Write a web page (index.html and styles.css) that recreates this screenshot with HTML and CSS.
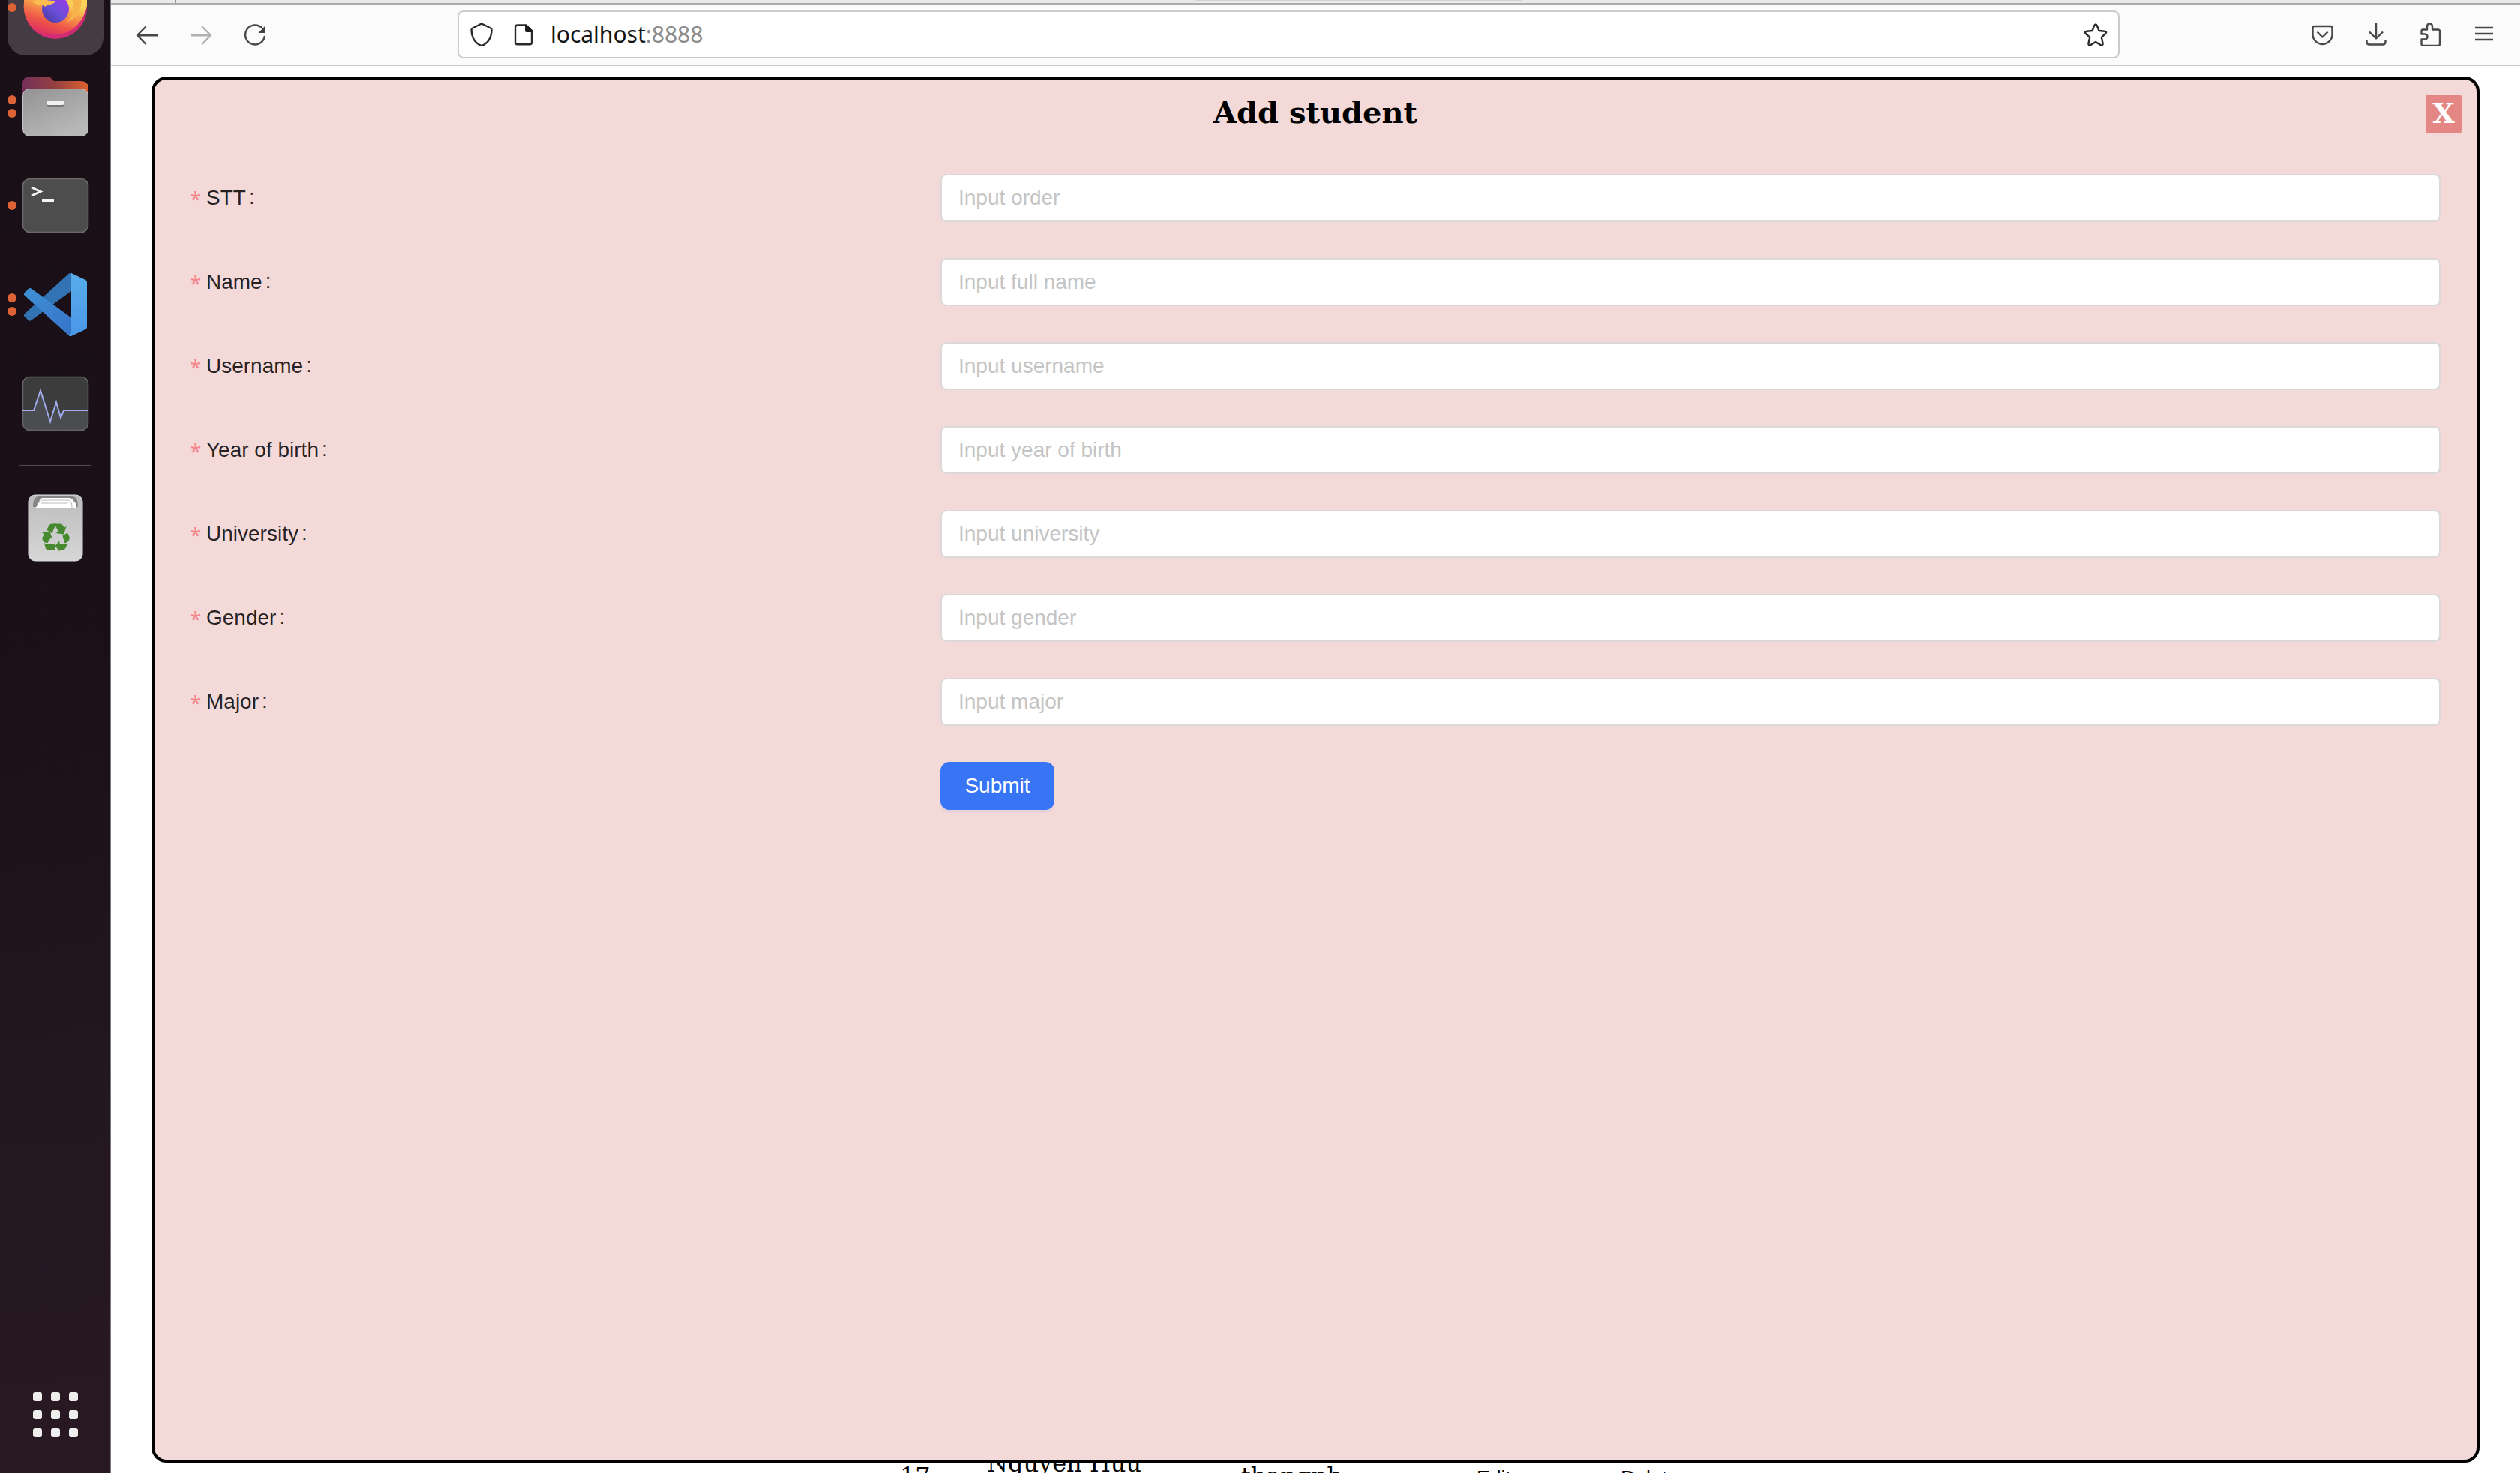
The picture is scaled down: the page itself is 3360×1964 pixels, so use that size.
FILE: index.html
```html
<!DOCTYPE html>
<html lang="en">
<head>
<meta charset="utf-8">
<title>Add student</title>
<link rel="stylesheet" href="styles.css">
</head>
<body>
<div class="desktop">
  <nav class="dock">
    <div class="dock-item dock-item-active">
      <svg width="128" height="74" viewBox="0 0 128 74">
        <defs>
          <linearGradient id="ffBody" x1="0.8" y1="0" x2="0.35" y2="1">
            <stop offset="0.35" stop-color="#fbd158"/><stop offset="0.55" stop-color="#f6974a"/><stop offset="0.78" stop-color="#ee5548"/><stop offset="1" stop-color="#dd3360"/>
          </linearGradient>
          <linearGradient id="ffCore" x1="1" y1="0" x2="0.2" y2="1">
            <stop offset="0.2" stop-color="#9040e6"/><stop offset="0.6" stop-color="#6a4fd8"/><stop offset="1" stop-color="#4a3aa6"/>
          </linearGradient>
        </defs>
        <circle cx="6" cy="10" r="6" fill="#dd6236"/>
        <circle cx="64" cy="10" r="42" fill="#d42c74"/>
        <path d="M22 4 A42 40 0 0 0 28 30 C38 46 54 47 64 46 C84 46 100 32 106 8 L106 -20 L22 -20Z" fill="url(#ffBody)"/>
        <path d="M84 -2 C92 6 88 22 78 30 C94 24 100 12 98 -2Z" fill="#f7b34c"/>
        <circle cx="64" cy="12" r="18" fill="url(#ffCore)"/>
        <path d="M33 2 C42 -4 56 2 64 1 C62 7 54 5 50 9 C48 5 38 8 33 2Z" fill="#fbbb4e"/>
      </svg>
    </div>
    <div class="dock-item">
      <svg width="128" height="128" viewBox="0 0 128 128">
        <defs>
          <linearGradient id="folderBack"><stop offset="0" stop-color="#74305a"/><stop offset="0.5" stop-color="#94403f"/><stop offset="1" stop-color="#e0622f"/></linearGradient>
          <linearGradient id="folderFront" x1="0" y1="0" x2="0.6" y2="1"><stop offset="0" stop-color="#939393"/><stop offset="1" stop-color="#b8b8b8"/></linearGradient>
        </defs>
        <circle cx="6" cy="55" r="6" fill="#dd6236"/><circle cx="6" cy="73" r="6" fill="#dd6236"/>
        <path d="M20 60 V34 Q20 24 30 24 H54 Q57 24 59 27 L62 30 H98 Q108 30 108 40 V60Z" fill="url(#folderBack)"/>
        <rect x="20.500" y="40.500" width="87" height="63" rx="9" fill="url(#folderFront)" stroke="#c4c4c4"/>
        <rect x="52" y="58" width="24" height="6" rx="3" fill="#777"/>
        <rect x="52" y="56" width="24" height="6" rx="3" fill="#f0f0f0"/>
      </svg>
    </div>
    <div class="dock-item">
      <svg width="128" height="128" viewBox="0 0 128 128">
        <circle cx="6" cy="64" r="6" fill="#dd6236"/>
        <rect x="20.500" y="28.500" width="87" height="71" rx="9" fill="#4d4d4d" stroke="#6b6b6b" stroke-width="1.500"/>
        <path d="M32 40 L44 45.500 L32 51" fill="none" stroke="#f2f2f2" stroke-width="3"/>
        <path d="M46 57.500 H62" stroke="#f2f2f2" stroke-width="3.500"/>
      </svg>
    </div>
    <div class="dock-item">
      <svg width="128" height="128" viewBox="0 0 128 128">
        <defs>
          <linearGradient id="codeRight" x1="0" y1="0" x2="0" y2="1"><stop offset="0" stop-color="#58adea"/><stop offset="1" stop-color="#4b97e8"/></linearGradient>
          <linearGradient id="codeFront" x1="0" y1="0" x2="1" y2="1"><stop offset="0" stop-color="#3f92d6"/><stop offset="1" stop-color="#3672c8"/></linearGradient>
        </defs>
        <circle cx="6" cy="55" r="6" fill="#dd6236"/><circle cx="6" cy="73" r="6" fill="#dd6236"/>
        <path d="M82 22.500 Q84 21.500 86 22.500 V45.300 L31.500 85 Q29.500 86.500 28 85 L22.800 80 Q21 78 23 76Z" fill="#3273b3"/>
        <path d="M23 52 Q21 50 22.800 48 L28 42.800 Q30 41 32 42.800 L86 82.300 V105.500 Q83 106.500 81 104.500Z" fill="url(#codeFront)"/>
        <path d="M85 22 L104 31 Q106 32 106 34 V94 Q106 96 104 97 L86 105.500 Q84 106.500 82 105.500 L85 102Z" fill="url(#codeRight)"/>
      </svg>
    </div>
    <div class="dock-item">
      <svg width="128" height="128" viewBox="0 0 128 128">
        <rect x="20.500" y="28.500" width="87" height="71" rx="9" fill="#3c3c3c"/>
        <path d="M20.500 73 H35 L44 46 L57 89 L65 62 L71 83 L75 73 H107.500 V90.500 Q107.500 99.500 98.500 99.500 H29.500 Q20.500 99.500 20.500 90.500Z" fill="#4a4c50"/>
        <rect x="20.500" y="28.500" width="87" height="71" rx="9" fill="none" stroke="#636563" stroke-width="1.500"/>
        <path d="M20 73 H35 L44 46.500 L57 88 L65 62 L71 83 L75 73 H108" fill="none" stroke="#9fabee" stroke-width="2"/>
      </svg>
    </div>
    <hr class="dock-rule">
    <div class="dock-item">
      <svg width="128" height="128" viewBox="0 0 128 128">
        <defs>
          <linearGradient id="binBody" x1="0" y1="0" x2="0" y2="1"><stop offset="0" stop-color="#bdbdbd"/><stop offset="1" stop-color="#d6d6d6"/></linearGradient>
        </defs>
        <rect x="28" y="20" width="72" height="88" rx="9" fill="url(#binBody)" stroke="#dcdcdc"/>
        <path d="M34 36 Q34 22 42 22 H86 Q94 22 94 36Z" fill="#858585"/>
        <path d="M38 37 L43 27 Q44 24 47 24 H82 Q86 24 88 28 L92 32 V37Z" fill="#fff"/>
        <path d="M42 31 L46 27 H82 Q86 28 86 37 M44 31 H80" fill="none" stroke="#bbb"/>
        <g fill="#46892f">
          <path d="M52 66.500 L56 60 Q57 58.500 59 58.500 H65 L60 69.500 L58.500 71Z"/>
          <path d="M62.500 58.500 H71 Q72.500 58.500 73.500 60 L75.500 63.500 L78.500 62 L75 72.500 L64.500 71 L68 69Z"/>
          <path d="M73.500 74.500 L80 70.500 L82.500 76 Q83.200 78 82.200 80 Q80.500 84 76 84.200Z"/>
          <path d="M80.500 84.500 L77 91.500 Q76 93.500 73.500 93.500 H69.500 V95.500 L63.500 88 L69.500 81 V85.500 H75Z"/>
          <path d="M49 84.500 Q51 85.500 54 85.500 H63 V93.500 H54 Q52 93.500 51 91.500Z"/>
          <path d="M46 70 L56.500 69 L60 79 L57.500 77.500 L53.500 84 Q49 84.500 47 80.500 Q45.500 78 47 76 L49 72.500Z"/>
        </g>
      </svg>
    </div>
    <div class="app-grid">
      <i></i><i></i><i></i><i></i><i></i><i></i><i></i><i></i><i></i>
    </div>
  </nav>

  <div class="browser">
    <div class="tab-strip"><span class="tab-divider"></span><span class="tab-shade"></span></div>
    <header class="toolbar">
      <div class="tools">
        <svg class="icon" viewBox="0 0 32 32"><path d="M30 17.200H3.500M14.500 5.500 3 17.200 14.500 29" /></svg>
        <svg class="icon icon-off" viewBox="0 0 32 32"><path d="M2 17.200H28.500M17.500 5.500 29 17.200 17.500 29"/></svg>
        <svg class="icon" viewBox="0 0 32 32"><path d="M25.500 7.500A13 13 0 1 0 29 18"/><path class="solid" d="M30 4V14H20.500Z"/></svg>
      </div>
      <div class="url-bar">
        <svg class="icon icon-dark" viewBox="0 0 32 32"><path d="M16 1.500 28 7.500Q29.500 8.200 29.500 10 29 26 16 31.200 3 26 2.500 10 2.500 8.200 4 7.500Z"/></svg>
        <svg class="icon icon-dark" viewBox="0 0 32 32"><path d="M8 3.500H19.500L27 11V26.500Q27 29.200 24.300 29.200H7.700Q5 29.200 5 26.500V6.500Q5 3.500 8 3.500Z"/><path class="solid" d="M18 3H20L28 11V13H20Q18 13 18 11Z"/></svg>
        <span class="url">localhost<span class="port">:8888</span></span>
        <svg class="icon icon-dark star" viewBox="0 0 32 32"><path d="M16 2.500Q17.200 2.500 18 4.500L20.500 11 28 11.800Q31.500 12.500 29 15L23.800 19.800 25.500 27.500Q26 31.500 22.500 30L16 26 9.500 30Q6 31.500 6.500 27.500L8.200 19.800 3 15Q.5 12.500 4 11.800L11.500 11 14 4.500Q14.800 2.500 16 2.500Z"/></svg>
      </div>
      <div class="tools tools-right">
        <svg class="icon" viewBox="0 0 32 32"><path d="M6 5H27Q29.500 5 29.500 7.500V16A13 13 0 0 1 3.500 16V7.500Q3.500 5 6 5ZM9.500 12.500 16.500 19.500 23.500 12.500"/></svg>
        <svg class="icon" viewBox="0 0 32 32"><path d="M16 1V21.500M7 12.500 16 21.500 25 12.500M3.500 23V26Q3.500 29.500 7 29.500H25Q28.500 29.500 28.500 26V23"/></svg>
        <svg class="icon" viewBox="0 0 32 32"><path d="M6 9.500H12V5.500Q12 1.500 15.500 1.500T19 5.500V9.500H26.500Q29 9.500 29 12V28.500Q29 31 26.500 31H6.500Q4.500 31 4.500 28.500V22.500H8.500Q12.500 22.500 12.500 19T8.500 15.500H4.500V12Q4.500 9.500 6 9.500Z"/></svg>
        <svg class="icon" viewBox="0 0 32 32"><path d="M4 7H28M4 15H28M4 23H28"/></svg>
      </div>
    </header>

    <main class="page">
      <div class="student-row">
        <span class="cell-order">17</span>
        <span class="cell-name">Nguyen Huu</span>
        <span class="cell-user">thangnh</span>
        <span class="cell-edit">Edit</span>
        <span class="cell-delete">Delete</span>
      </div>

      <section class="modal">
        <h1 class="modal-title">Add student</h1>
        <button class="modal-close" type="button">X</button>
        <form class="form">
          <div class="field"><label class="label">STT</label><input class="input" placeholder="Input order"></div>
          <div class="field"><label class="label">Name</label><input class="input" placeholder="Input full name"></div>
          <div class="field"><label class="label">Username</label><input class="input" placeholder="Input username"></div>
          <div class="field"><label class="label">Year of birth</label><input class="input" placeholder="Input year of birth"></div>
          <div class="field"><label class="label">University</label><input class="input" placeholder="Input university"></div>
          <div class="field"><label class="label">Gender</label><input class="input" placeholder="Input gender"></div>
          <div class="field"><label class="label">Major</label><input class="input" placeholder="Input major"></div>
          <div class="field"><button class="submit" type="button">Submit</button></div>
        </form>
      </section>
    </main>
  </div>
</div>
</body>
</html>
```
FILE: styles.css
```css
* { box-sizing: border-box; }
body { margin: 0; background: #fff; }
.desktop { display: flex; width: 3360px; height: 1964px; overflow: hidden; }

.dock {
  display: flex; flex-direction: column; align-items: center; gap: 4px;
  flex: none; width: 148px; height: 1964px;
  border-right: 1px solid #7d787c;
  background: linear-gradient(170deg, #190f17 0%, #1b1017 45%, #231720 75%, #281822 100%);
}
.dock-item { width: 128px; height: 128px; flex: none; }
.dock-item svg { display: block; }
.dock-item-active { height: 74px; border-radius: 0 0 24px 24px; background: #443c42; overflow: hidden; }
.dock-rule { width: 96px; height: 2px; margin: 14px 0; border: 0; background: #514950; flex: none; }
.app-grid { display: grid; grid-template-columns: repeat(3, 12px); gap: 12px; margin: auto 0 48px; }
.app-grid i { width: 12px; height: 12px; border-radius: 3px; background: #eeeeec; }

.browser { display: flex; flex-direction: column; flex: 1; min-width: 0; }
.tab-strip { display: flex; height: 6px; background: #e9e9e9; border-bottom: 2px solid #acacac; flex: none; }
.tab-divider { width: 1px; height: 4px; margin-left: 85px; background: #999; }
.tab-shade { width: 436px; height: 2px; margin-left: 1360px; background: linear-gradient(#cfcfcf, #e2e2e2); }

.toolbar {
  display: flex; align-items: center; height: 82px; flex: none;
  padding: 0 32px; background: #fbfbfb; border-bottom: 2px solid #ccc;
}
.tools { display: flex; gap: 40px; }
.icon { width: 32px; height: 32px; flex: none; fill: none; stroke: #484848; stroke-width: 2.4; stroke-linejoin: round; }
.icon .solid { fill: #404040; stroke: none; }
.icon-off { stroke: #b0b0b0; }
.icon-dark { stroke: #2a2a2a; }
.icon-dark .solid { fill: #1d1d1d; }
.url-bar {
  display: flex; align-items: center; width: 2216px; height: 64px;
  margin-left: 254px; padding: 0 14px; gap: 24px;
  border: 2px solid #ccc; border-radius: 8px; background: #fff;
}
.url { margin-left: -4px; font: 30px/40px "Noto Sans", sans-serif; color: #151515; }
.port { color: #8b8b8b; }
.star { margin-left: auto; }
.tools-right { margin-left: auto; }

.page { position: relative; flex: 1; overflow: hidden; background: #fff; }
.student-row {
  display: flex; align-items: center; height: 74px; margin-top: 1845px;
  padding-left: 1052px; font: 32px/37px "DejaVu Serif", serif; color: #000;
}
.cell-order { width: 116px; padding-bottom: 4px; }
.cell-name { width: 339px; padding-bottom: 37px; }
.cell-user { width: 314px; padding-bottom: 4px; }
.cell-edit, .cell-delete { font: 26.67px/30px "Liberation Sans", Arial, sans-serif; width: 192px; }

.modal {
  position: absolute; inset: 14px 54px 14px 54px;
  border: 4px solid #000; border-radius: 20px; background: #f4d9d9;
}
.modal-title { margin: 20px 0 0; text-align: center; font: bold 40px/47px "DejaVu Serif", serif; color: #000; }
.modal-close {
  position: absolute; top: 20px; right: 20px; width: 48px; height: 52px; padding: 0 0 3px;
  border: 0; border-radius: 4px; background: #e48683; color: #fff;
  font: bold 38px/49px "DejaVu Serif", serif;
}
.form { display: flex; flex-direction: column; gap: 48px; padding: 59px 48px 0; font-family: "Liberation Sans", Arial, sans-serif; }
.field { display: grid; grid-template-columns: 1fr 2fr; height: 64px; }
.label { font-size: 28px; line-height: 64px; color: rgba(0, 0, 0, .85); }
.label::before {
  content: "*"; display: inline-block; position: relative; top: 3px; left: -1px;
  width: 14px; margin-right: 7px; color: #f5868a; font: 28px/1 "Noto Sans", sans-serif;
}
.label::after { content: ":"; position: relative; top: -1px; margin-left: 4px; }
.input {
  width: 100%; height: 64px; padding: 0 22px; border: 2px solid #d9d9d9; border-radius: 8px;
  background: #fff; font: 28px "Liberation Sans", Arial, sans-serif; color: #222;
}
.input::placeholder { color: #c4c4c4; opacity: 1; }
.submit {
  grid-column: 2; justify-self: start; width: 152px; height: 64px; padding: 0;
  border: 0; border-radius: 12px; background: #3875f6; color: #fff;
  font: 28px "Liberation Sans", Arial, sans-serif; box-shadow: 0 4px 0 rgba(5, 95, 255, .06);
}
```
